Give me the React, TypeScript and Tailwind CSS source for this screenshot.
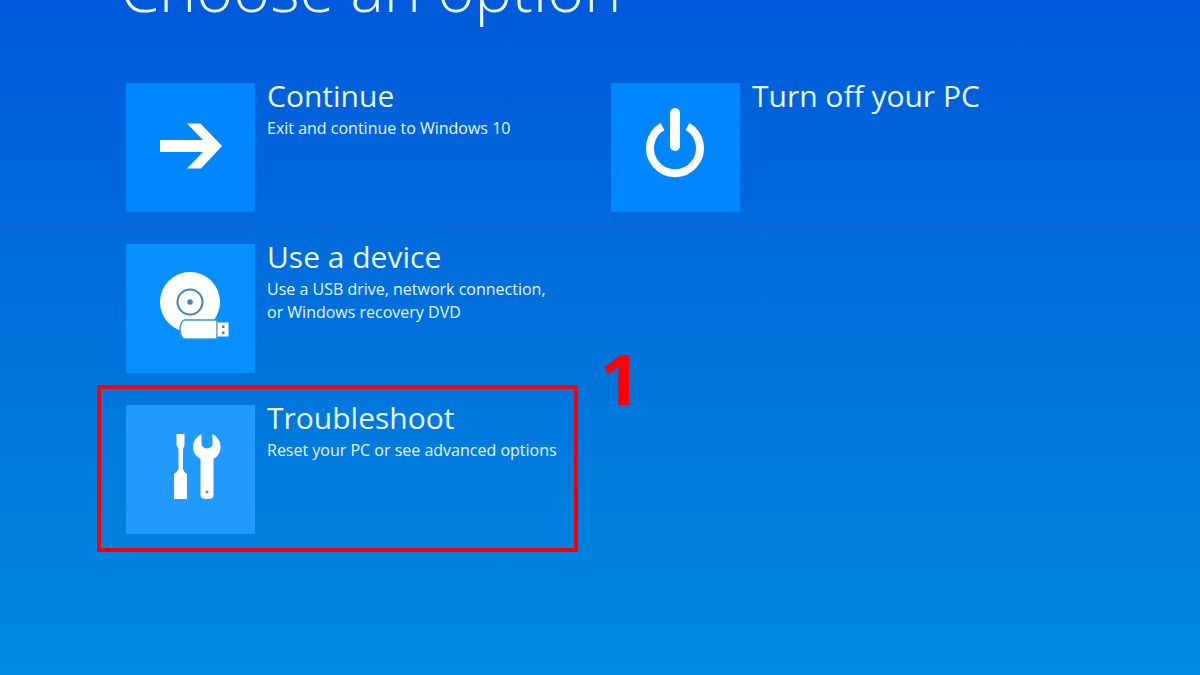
import type { ReactNode } from 'react';

interface OptionProps {
  title: string;
  description?: string;
  tileClass: string;
  icon: ReactNode;
}

function ArrowIcon() {
  return (
    <svg viewBox="0 0 129 129" className="size-full" fill="#fff" aria-hidden="true">
      <path d="M34 57H77L61 40.500H74.500L96 63L75 85.500H61L77 69H34Z" />
    </svg>
  );
}

function PowerIcon() {
  return (
    <svg viewBox="0 0 129 129" className="size-full" fill="none" stroke="#fff" aria-hidden="true">
      <path d="M51.500 43.500A25 25 0 1 0 76.500 43.500" strokeWidth="8" />
      <path d="M64 30V63" strokeWidth="10" strokeLinecap="round" />
    </svg>
  );
}

function DeviceIcon() {
  return (
    <svg viewBox="0 0 129 129" className="size-full" aria-hidden="true">
      <circle cx="64" cy="58" r="30" fill="#fff" />
      <circle cx="64" cy="58" r="12.500" fill="none" stroke="#3c87b8" strokeWidth="2" />
      <circle cx="64" cy="58" r="2.800" fill="#3c87b8" />
      <path d="M58 76H91V95H58Q54 92 54 85.500T58 76Z" fill="#fff" stroke="#3c96cc" strokeWidth="1.500" />
      <path d="M91.500 78.500H102.500V92.500H91.500Z" fill="#fff" />
      <path d="M96 81.500H98.500V84H96ZM96 87.500H98.500V90H96Z" fill="#4d7d99" />
    </svg>
  );
}

function ToolsIcon() {
  return (
    <svg viewBox="0 0 129 129" className="size-full" fill="#fff" aria-hidden="true">
      <path d="M50.500 29H58.500V40L57 44V64Q57.500 66.500 61 69V94H48V69Q51.500 66.500 52.500 64V44L50.500 40Z" />
      <path d="M75.500 29V40Q78 43.500 81 43.500T86.500 40V29Q94.500 33 94.500 42Q94.500 50 87.500 54V90.500Q87.500 94 81 94T74.500 90.500V54Q67 50 67 42Q67 33 75.500 29Z" />
      <circle cx="81" cy="87" r="1.500" fill="#4a8fc0" />
    </svg>
  );
}

function Option({ title, description, tileClass, icon }: OptionProps) {
  return (
    <button type="button" className="flex w-full items-start gap-3 text-left">
      <span className={`size-[129px] shrink-0 ${tileClass}`}>{icon}</span>
      <span className="min-w-0">
        <span className="block text-[30px] leading-[26px]">{title}</span>
        {description && (
          <span className="mt-2 block text-base leading-[23px] whitespace-pre-line">{description}</span>
        )}
      </span>
    </button>
  );
}

export default function App() {
  return (
    <main className="min-h-screen overflow-hidden bg-linear-to-b from-[#0059da] via-[#0072dc] to-[#008ae0] pl-[126px] font-['Open_Sans','Noto_Sans',sans-serif] text-[#e6f8ff]">
      <h1 className="-mt-14 -ml-1.5 text-[63px] leading-[88px] font-light">Choose an option</h1>

      <div className="mt-[51px] grid grid-cols-[452px_minmax(0,1fr)] gap-x-[33px]">
        <div className="flex flex-col gap-8">
          <Option
            title="Continue"
            description="Exit and continue to Windows 10"
            tileClass="bg-[#0086ff]"
            icon={<ArrowIcon />}
          />
          <Option
            title="Use a device"
            description={'Use a USB drive, network connection,\nor Windows recovery DVD'}
            tileClass="bg-[#0890ff]"
            icon={<DeviceIcon />}
          />
          <div className="relative">
            <Option
              title="Troubleshoot"
              description="Reset your PC or see advanced options"
              tileClass="bg-[#209aff]"
              icon={<ToolsIcon />}
            />
            {/* Step marker */}
            <div className="pointer-events-none absolute -top-5 right-0 -bottom-[18px] -left-[29px] border-4 border-[#f00008]" />
            <span className="absolute -top-[62px] left-full ml-[22px] text-[70px] leading-[70px] font-bold text-[#ff0000]">
              1
            </span>
          </div>
        </div>

        <div>
          <Option title="Turn off your PC" tileClass="bg-[#0086ff]" icon={<PowerIcon />} />
        </div>
      </div>
    </main>
  );
}
